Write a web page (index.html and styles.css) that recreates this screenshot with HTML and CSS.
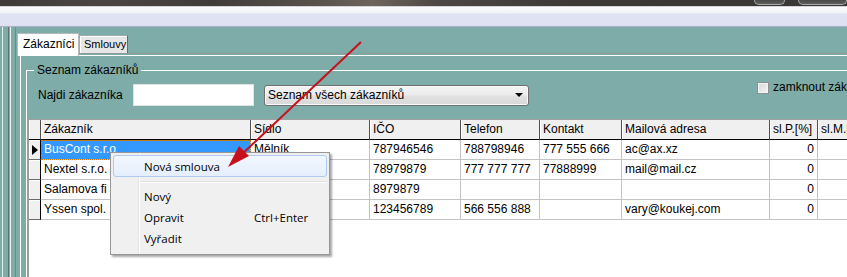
FILE: index.html
```html
<!DOCTYPE html>
<html lang="cs">
<head>
<meta charset="utf-8">
<title>Zákazníci</title>
<link rel="stylesheet" href="styles.css">
</head>
<body>
<div class="titlebar">
  <span class="cbtn min"></span>
  <span class="cbtn max"></span>
</div>
<div class="menubar"></div>
<div class="client">
  <div class="frame"></div>
  <div class="tabctl">
    <div class="tabstrip">
      <div class="tab active">Zákazníci</div>
      <div class="tab small">Smlouvy</div>
    </div>
    <div class="page">
      <fieldset class="group">
        <legend class="legend">Seznam zákazníků</legend>
        <div class="search">
          <span class="lbl">Najdi zákazníka</span>
          <span class="input"></span>
          <span class="select"><span class="seltext">Seznam všech zákazníků</span><span class="arrow"></span></span>
          <span class="check"><span class="box"></span><span>zamknout zákazníka</span></span>
        </div>
        <div class="grid">
          <div class="hc ind"></div>
          <div class="hc">Zákazník</div>
          <div class="hc">Sídlo</div>
          <div class="hc">IČO</div>
          <div class="hc">Telefon</div>
          <div class="hc">Kontakt</div>
          <div class="hc">Mailová adresa</div>
          <div class="hc">sl.P.[%]</div>
          <div class="hc">sl.M.[%]</div>

          <div class="c ind"><span class="tri"></span></div>
          <div class="c sel">BusCont s.r.o</div>
          <div class="c">Mělník</div>
          <div class="c">787946546</div>
          <div class="c">788798946</div>
          <div class="c">777 555 666</div>
          <div class="c">ac@ax.xz</div>
          <div class="c num">0</div>
          <div class="c num"></div>

          <div class="c ind"></div>
          <div class="c">Nextel s.r.o.</div>
          <div class="c"></div>
          <div class="c">78979879</div>
          <div class="c">777 777 777</div>
          <div class="c">77888999</div>
          <div class="c">mail@mail.cz</div>
          <div class="c num">0</div>
          <div class="c num"></div>

          <div class="c ind"></div>
          <div class="c">Salamova fi</div>
          <div class="c"></div>
          <div class="c">8979879</div>
          <div class="c"></div>
          <div class="c"></div>
          <div class="c"></div>
          <div class="c num">0</div>
          <div class="c num"></div>

          <div class="c ind"></div>
          <div class="c">Yssen spol.</div>
          <div class="c"></div>
          <div class="c">123456789</div>
          <div class="c">566 556 888</div>
          <div class="c"></div>
          <div class="c">vary@koukej.com</div>
          <div class="c num">0</div>
          <div class="c num"></div>
        </div>
      </fieldset>
    </div>
  </div>
</div>

<div class="menu">
  <div class="mi hot"><span class="ml">Nová smlouva</span></div>
  <div class="msep"></div>
  <div class="mi"><span class="ml">Nový</span></div>
  <div class="mi"><span class="ml">Opravit</span><span class="mk">Ctrl+Enter</span></div>
  <div class="mi"><span class="ml">Vyřadit</span></div>
</div>

<svg class="annot" width="847" height="277" viewBox="0 0 847 277">
  <line x1="361" y1="42" x2="240" y2="156" stroke="#c8101c" stroke-width="2"/>
  <polygon points="228,167 249,156 239,146" fill="#c8101c"/>
</svg>
</body>
</html>
```
FILE: styles.css
```css
* { box-sizing: border-box; margin: 0; padding: 0; }
html, body { width: 847px; height: 277px; overflow: hidden; }
body {
  position: relative;
  font-family: "Liberation Sans", Arial, sans-serif;
  font-size: 12px;
  color: #000;
  background: #7eaca8;
}

.titlebar {
  height: 6px;
  display: flex;
  justify-content: flex-end;
  align-items: flex-start;
  background: linear-gradient(90deg, #3e3b39 0%, #4b4643 12%, #403c3a 25%, #5a534e 38%, #6d645d 44%, #4c4744 52%, #3b3836 68%, #3a3836 100%);
}
.cbtn {
  height: 5px;
  border: 1px solid #a8a8a8;
  border-top: 0;
  border-radius: 0 0 5px 5px;
  background: linear-gradient(#4a4a4a, #5e5e5e);
}
.cbtn.min { width: 31px; margin-right: 13px; }
.cbtn.max { width: 49px; }

.menubar {
  height: 21px;
  border-top: 1px solid #d4d4d8;
  border-bottom: 1px solid #aab0c6;
  background: linear-gradient(#fbfcfe 0, #f0f2f9 6px, #dfe2f2 7px, #dde1f2 100%);
}

.client { display: flex; height: 250px; }
.frame {
  width: 17px;
  flex: none;
  background: linear-gradient(90deg,
    #7eaca8 0 2px, #e6efee 2px 3px, #7eaca8 3px 8px, #5d7371 8px 9px,
    #7eaca8 9px 10px, #eef4f3 10px 11px, #7eaca8 11px 15px, #6d8c89 15px 16px, #7eaca8 16px);
}

.tabctl { flex: 1; display: flex; flex-direction: column; min-width: 0; }
.tabstrip {
  height: 27px;
  display: flex;
  align-items: flex-end;
  border-bottom: 1px solid #8b9997;
  flex: none;
}
.tab {
  height: 18px;
  width: 49px;
  padding-left: 4px;
  line-height: 16px;
  background: #e6e6e6;
  border: 1px solid #a9a9a9;
  border-bottom: 0;
  border-right-color: #6a6a6a;
  box-shadow: inset 1px 1px 0 #fff;
  white-space: nowrap;
}
.tab.small { font-size: 11px; }
.tab.active {
  height: 23px;
  width: 62px;
  padding-left: 5px;
  line-height: 20px;
  background: #fff;
  border-color: #b8b8b8;
  margin-bottom: -3px;
  position: relative;
  z-index: 1;
  box-shadow: none;
}

.page {
  flex: 1;
  margin-top: 1px;
  margin-left: 3px;
  border-top: 1px solid #fff;
  border-left: 1px solid #fff;
  padding: 7px 0 0 5px;
  overflow: hidden;
}

.group {
  border: 1px solid #fff;
  width: 900px;
  height: 400px;
  padding: 6px 0 0 1px;
  min-width: 0;
}
.legend {
  margin-left: 6px;
  padding: 0 3px;
  line-height: 15px;
  font-size: 12px;
}

.search { display: flex; align-items: center; height: 22px; }
.lbl { margin-left: 10px; width: 95px; flex: none; }
.input {
  width: 121px; height: 22px; flex: none;
  background: #fff;
  border: 1px solid #dde4e3;
}
.select {
  margin-left: 10px;
  width: 265px; height: 21px; flex: none;
  display: flex; align-items: center;
  border: 1px solid #707070;
  border-radius: 3px;
  background: linear-gradient(#f4f4f4 0%, #ececec 45%, #e1e1e1 55%, #d8d8d8 100%);
  box-shadow: inset 0 0 0 1px #fbfbfb;
  padding-left: 3px;
}
.seltext { flex: 1; }
.arrow {
  width: 0; height: 0;
  border-left: 4px solid transparent;
  border-right: 4px solid transparent;
  border-top: 4px solid #000;
  margin-right: 5px;
}
.check {
  margin-left: 228px;
  align-self: flex-start;
  margin-top: -3px;
  display: flex; align-items: center; gap: 4px;
  white-space: nowrap;
  line-height: 13px;
}
.box {
  width: 12px; height: 12px;
  border: 1px solid #8e8f8f;
  background: linear-gradient(135deg, #d6d6d6, #f6f6f6);
  box-shadow: inset 0 0 0 1px #f4f4f4;
}

.grid {
  margin-top: 13px;
  display: grid;
  grid-template-columns: 12px 210px 119px 91px 79px 82px 148px 48px 80px;
  grid-auto-rows: 20px;
  border-top: 1px solid #a0a0a0;
  border-left: 1px solid #9c9c9c;
  background: #fff;
  height: 300px;
  align-content: start;
}
.hc {
  background: #f0f0f0;
  border-right: 1px solid #505050;
  border-bottom: 1px solid #000;
  padding-left: 3px;
  line-height: 19px;
  white-space: nowrap;
  overflow: hidden;
  box-shadow: inset 1px 0 0 #fff;
}
.c {
  border-right: 1px solid #c3c3c3;
  border-bottom: 1px solid #c3c3c3;
  padding-left: 3px;
  line-height: 19px;
  white-space: nowrap;
  overflow: hidden;
}
.c.num { text-align: right; padding-right: 3px; }
.c.ind {
  background: #f0f0f0;
  border-right: 1px solid #000;
  border-bottom: 1px solid #6b6b6b;
  box-shadow: inset 1px 1px 0 #fff;
  padding: 0;
  display: flex;
  align-items: center;
  justify-content: center;
}
.tri {
  width: 0; height: 0;
  border-top: 5px solid transparent;
  border-bottom: 5px solid transparent;
  border-left: 6px solid #000;
  margin-left: 1px;
}
.c.sel {
  background: #3399ff;
  color: #fff;
  outline: 1px dotted #c07a20;
  outline-offset: -1px;
}

.menu {
  position: absolute;
  left: 110px;
  top: 152px;
  width: 220px;
  height: 103px;
  border: 1px solid #979797;
  background: linear-gradient(90deg, #f0f0f0 0 27px, #e2e3e3 27px 28px, #ffffff 28px 29px, #f0f0f0 29px);
  box-shadow: 2px 2px 2px rgba(0, 0, 0, 0.35);
  padding: 2px 2px 4px;
  font-family: "Open Sans", "Noto Sans", sans-serif;
  font-size: 11.5px;
  color: #000;
  z-index: 5;
}
.mi {
  height: 21px;
  display: flex;
  align-items: center;
  padding-left: 31px;
}
.mi.hot {
  height: 22px;
  padding-left: 30px;
  border: 1px solid #aecbef;
  border-radius: 3px;
  background: linear-gradient(#f2f7fe, #e4eefc);
}
.ml { width: 110px; flex: none; }
.msep {
  height: 9px;
  margin-left: 27px;
  background: linear-gradient(#f0f0f0 0 4px, #e0e0e0 4px 5px, #ffffff 5px 6px, #f0f0f0 6px);
}

.annot {
  position: absolute;
  left: 0;
  top: 0;
  z-index: 10;
  pointer-events: none;
}
```
